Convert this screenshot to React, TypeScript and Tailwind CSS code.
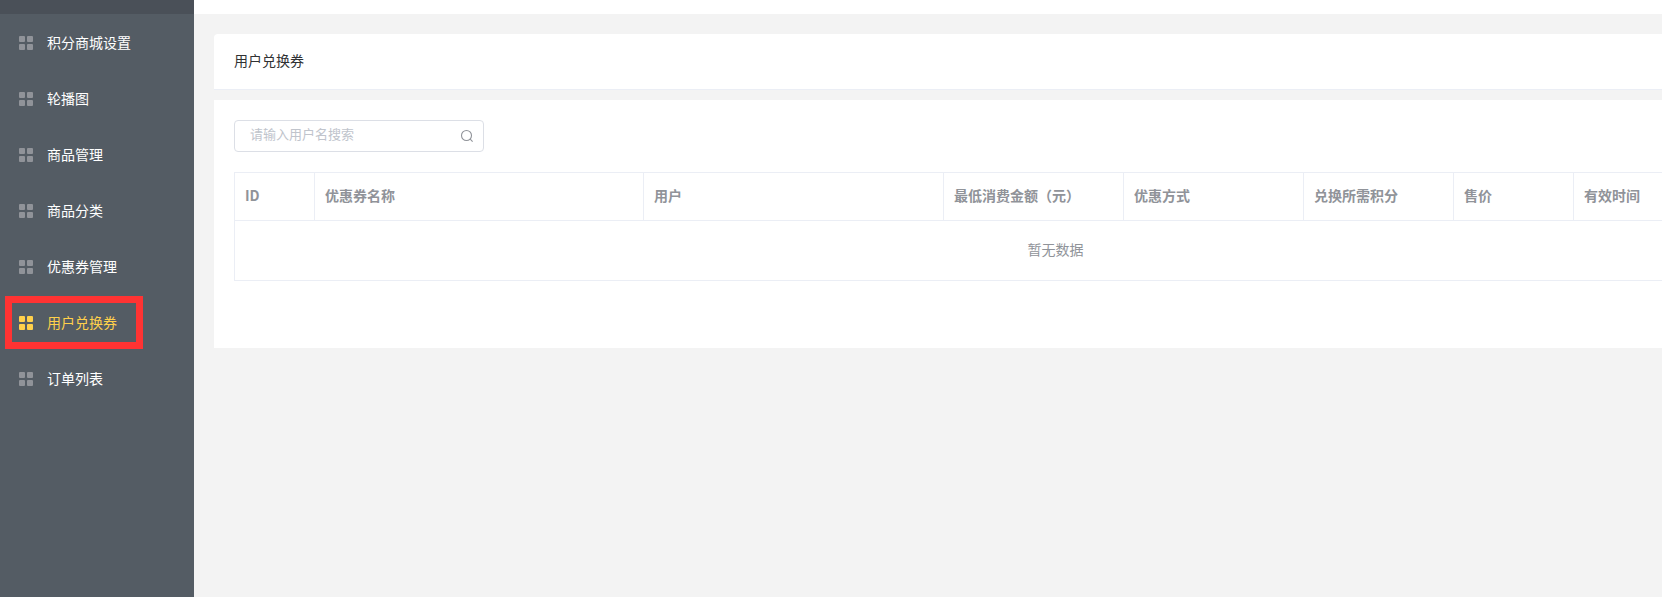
import React from "react";

const items = ["积分商城设置", "轮播图", "商品管理", "商品分类", "优惠券管理", "用户兑换券", "订单列表"];
const cols: [string, string][] = [
  ["ID", "w-[80px]"],
  ["优惠券名称", "w-[329px]"],
  ["用户", "w-[300px]"],
  ["最低消费金额（元）", "w-[180px]"],
  ["优惠方式", "w-[180px]"],
  ["兑换所需积分", "w-[150px]"],
  ["售价", "w-[120px]"],
  ["有效时间", "w-[303px]"],
];

function Grid({ active }: { active: boolean }) {
  const c = active ? "bg-[#ffd04b]" : "bg-[#909399]";
  return (
    <span className="mt-[2px] grid grid-cols-2 gap-[2px] w-[14px] h-[14px] shrink-0">
      <i className={`rounded-[1px] ${c}`} />
      <i className={`rounded-[1px] ${c}`} />
      <i className={`rounded-[1px] ${c}`} />
      <i className={`rounded-[1px] ${c}`} />
    </span>
  );
}

export default function App() {
  return (
    <div className="relative flex h-[597px] w-[1662px] overflow-hidden bg-[#f3f3f3] font-['Noto_Sans_CJK_SC','Microsoft_YaHei',sans-serif]">
      <aside className="w-[194px] shrink-0 bg-[#545c64]">
        <div className="h-[14px] bg-[#4a5058]" />
        <nav className="flex flex-col">
          {items.map((t) => {
            const active = t === "用户兑换券";
            return (
              <div key={t} className={`flex h-[56px] items-center gap-[14px] pl-[19px] text-[14px] ${active ? "text-[#ffd04b]" : "text-white"}`}>
                <Grid active={active} />
                <span>{t}</span>
              </div>
            );
          })}
        </nav>
      </aside>
      <main className="flex-1 min-w-0 flex flex-col">
        <div className="h-[14px] bg-white" />
        <div className="pl-[20px] pt-[20px] flex flex-col gap-[10px]">
          <div className="h-[56px] bg-white rounded-tl-[4px] border-b border-[#ebeef5] flex items-center pl-[20px] pb-[2px] text-[14px] text-[#303133]">
            用户兑换券
          </div>
          <div className="h-[248px] bg-white pl-[20px] pt-[20px] overflow-hidden">
            <div className="flex h-[32px] w-[250px] items-center justify-between rounded-[4px] border border-[#dcdfe6] pl-[15px] pr-[9px]">
              <span className="pb-[4px] text-[13px] text-[#c0c4cc]">请输入用户名搜索</span>
              <svg width="14" height="14" viewBox="0 0 14 14" fill="none" stroke="#909399" strokeWidth="1.1">
                <circle cx="6.5" cy="6.5" r="5" />
                <path d="M10.2 10.2 L12.6 12.6" />
              </svg>
            </div>
            <table className="mt-[20px] w-[1642px] table-fixed border-collapse text-[14px] text-[#909399]">
              <colgroup>
                {cols.map(([n, w]) => (
                  <col key={n} className={w} />
                ))}
              </colgroup>
              <thead>
                <tr className="h-[48px]">
                  {cols.map(([n]) => (
                    <th key={n} className="border border-[#ebeef5] pl-[10px] pr-[10px] pb-[2px] text-left font-bold whitespace-nowrap">
                      {n}
                    </th>
                  ))}
                </tr>
              </thead>
              <tbody>
                <tr className="h-[60px]">
                  <td colSpan={8} className="border border-[#ebeef5] pb-[2px] text-center text-[14px]">
                    暂无数据
                  </td>
                </tr>
              </tbody>
            </table>
          </div>
        </div>
      </main>
      <div className="absolute left-[5px] top-[296px] h-[53px] w-[138px] border-[7px] border-[#ff3333]" />
    </div>
  );
}
